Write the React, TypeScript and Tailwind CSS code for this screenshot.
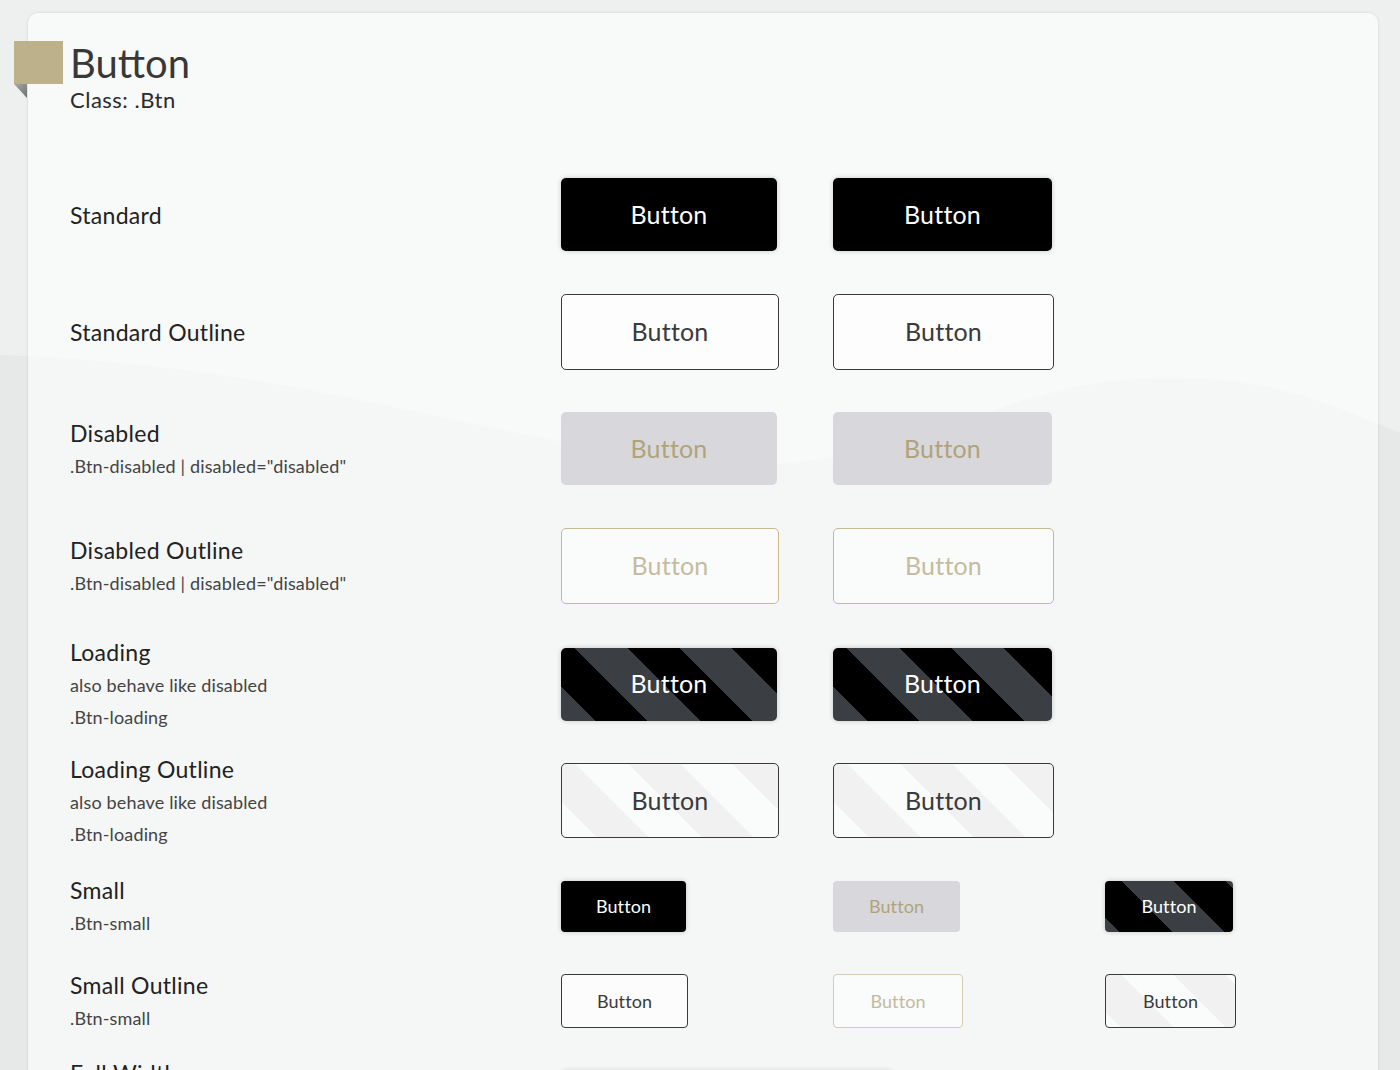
import React from "react";

type Kind =
  | "std"
  | "out"
  | "dis"
  | "disout"
  | "load"
  | "loadout"
  | "sstd"
  | "sdis"
  | "sload"
  | "sout"
  | "sdisout"
  | "sloadout";

type Btn = { kind: Kind; w: string; h: string };

const big = "text-[25px] tracking-[0.2px]";
const small = "text-[18px] tracking-[0.1px]";

const kindClass: Record<Kind, string> = {
  std: `bg-black text-white rounded-[5px] shadow-[0_0_5px_rgba(0,0,0,0.2)] ${big}`,
  out: `bg-white/70 text-[#3a3a3a] border border-[#3a3a3a] rounded-[5px] ${big}`,
  dis: `bg-[#d8d8dc] text-[#b0a37b] rounded-[5px] ${big}`,
  disout: `bg-white/50 text-[#c6bb9d] border border-[#c9b98f] rounded-[5px] ${big}`,
  load: `text-white rounded-[5px] shadow-[0_0_5px_rgba(0,0,0,0.2)] ${big} [background-image:repeating-linear-gradient(45deg,#3b3e42_0px,#3b3e42_24.5px,#000_24.5px,#000_61.5px,#3b3e42_61.5px,#3b3e42_74px)]`,
  loadout: `text-[#3a3a3a] border border-[#3a3a3a] rounded-[5px] ${big} [background-image:repeating-linear-gradient(45deg,#fafbfb_0px,#fafbfb_24.5px,#f1f1f1_24.5px,#f1f1f1_61.5px,#fafbfb_61.5px,#fafbfb_74px)]`,
  sstd: `bg-black text-white rounded-[4px] shadow-[0_0_5px_rgba(0,0,0,0.2)] ${small}`,
  sdis: `bg-[#d8d8dc] text-[#b0a37b] rounded-[4px] ${small}`,
  sload: `text-white rounded-[4px] shadow-[0_0_5px_rgba(0,0,0,0.2)] ${small} [background-image:repeating-linear-gradient(45deg,#3b3e42_0px,#3b3e42_10.4px,#000_10.4px,#000_47.4px,#3b3e42_47.4px,#3b3e42_74px)]`,
  sout: `bg-white/70 text-[#3a3a3a] border border-[#3a3a3a] rounded-[4px] ${small}`,
  sdisout: `bg-white/50 text-[#c4b9a0] border border-[#d6cbb0] rounded-[4px] ${small}`,
  sloadout: `text-[#3a3a3a] border border-[#3a3a3a] rounded-[4px] ${small} [background-image:repeating-linear-gradient(45deg,#fafbfb_0px,#fafbfb_10.4px,#f1f1f1_10.4px,#f1f1f1_47.4px,#fafbfb_47.4px,#fafbfb_74px)]`,
};

type Row = { label: string; subs: string[]; h: string; buttons: Btn[] };

const disSub = '.Btn-disabled | disabled="disabled"';
const loadSubs = ["also behave like disabled", ".Btn-loading"];

const rows: Row[] = [
  {
    label: "Standard",
    subs: [],
    h: "h-[117px]",
    buttons: [
      { kind: "std", w: "w-[216px]", h: "h-[73px]" },
      { kind: "std", w: "w-[219px]", h: "h-[73px]" },
    ],
  },
  {
    label: "Standard Outline",
    subs: [],
    h: "h-[117px]",
    buttons: [
      { kind: "out", w: "w-[218px]", h: "h-[76px]" },
      { kind: "out", w: "w-[221px]", h: "h-[76px]" },
    ],
  },
  {
    label: "Disabled",
    subs: [disSub],
    h: "h-[117px]",
    buttons: [
      { kind: "dis", w: "w-[216px]", h: "h-[73px]" },
      { kind: "dis", w: "w-[219px]", h: "h-[73px]" },
    ],
  },
  {
    label: "Disabled Outline",
    subs: [disSub],
    h: "h-[118px]",
    buttons: [
      { kind: "disout", w: "w-[218px]", h: "h-[76px]" },
      { kind: "disout", w: "w-[221px]", h: "h-[76px]" },
    ],
  },
  {
    label: "Loading",
    subs: loadSubs,
    h: "h-[118px]",
    buttons: [
      { kind: "load", w: "w-[216px]", h: "h-[73px]" },
      { kind: "load", w: "w-[219px]", h: "h-[73px]" },
    ],
  },
  {
    label: "Loading Outline",
    subs: loadSubs,
    h: "h-[115px]",
    buttons: [
      { kind: "loadout", w: "w-[218px]", h: "h-[75px]" },
      { kind: "loadout", w: "w-[221px]", h: "h-[75px]" },
    ],
  },
  {
    label: "Small",
    subs: [".Btn-small"],
    h: "h-[96px]",
    buttons: [
      { kind: "sstd", w: "w-[125px]", h: "h-[51px]" },
      { kind: "sdis", w: "w-[127px]", h: "h-[51px]" },
      { kind: "sload", w: "w-[128px]", h: "h-[51px]" },
    ],
  },
  {
    label: "Small Outline",
    subs: [".Btn-small"],
    h: "h-[94px]",
    buttons: [
      { kind: "sout", w: "w-[127px]", h: "h-[54px]" },
      { kind: "sdisout", w: "w-[130px]", h: "h-[54px]" },
      { kind: "sloadout", w: "w-[131px]", h: "h-[54px]" },
    ],
  },
];

function Button({ b }: { b: Btn }) {
  return (
    <div
      className={`${b.w} ${b.h} ${kindClass[b.kind]} flex items-center justify-center shrink-0 select-none`}
    >
      Button
    </div>
  );
}

function Label({ label, subs }: { label: string; subs: string[] }) {
  return (
    <div className="w-[491px] shrink-0">
      <div className="text-[23px] leading-[34px] tracking-[0.3px] text-[#222]">{label}</div>
      {subs.map((s) => (
        <div key={s} className="text-[18px] leading-[32px] tracking-[0.15px] text-[#444]">
          {s}
        </div>
      ))}
    </div>
  );
}

export default function App() {
  return (
    <div className="relative h-[1070px] w-[1400px] overflow-hidden bg-[#eef0f0] font-[Lato,'Liberation_Sans',sans-serif]">
      <svg
        className="absolute inset-0 w-full h-full pointer-events-none"
        viewBox="0 0 1400 1070"
        preserveAspectRatio="none"
      >
        <path
          d="M0 355 C 300 365, 480 440, 700 462 C 900 480, 980 385, 1150 378 C 1280 374, 1340 410, 1400 432 L1400 1070 L0 1070 Z"
          fill="rgba(0,0,0,0.028)"
        />
      </svg>

      <div className="relative ml-[28px] mr-[22px] mt-[13px] h-[1200px] rounded-t-[10px] bg-white/60 shadow-[0_0_3px_rgba(0,0,0,0.12)] pl-[42px] pt-[30px]">
        {/* ribbon badge */}
        <div className="absolute left-[-14px] top-[28px] w-[49px] h-[43px] bg-[#bdb18c]" />
        <svg className="absolute left-[-14px] top-[71px]" width="13" height="14" viewBox="0 0 13 14">
          <defs>
            <linearGradient id="fold" x1="0" y1="0" x2="1" y2="1">
              <stop offset="0" stopColor="#a9a9a9" />
              <stop offset="1" stopColor="#6f6f6f" />
            </linearGradient>
          </defs>
          <polygon points="0,0 13,0 13,14" fill="url(#fold)" />
        </svg>

        <div className="text-[40px] leading-[40px] text-[#383838]">Button</div>
        <div className="mt-[4px] text-[22px] leading-[26px] tracking-[0.5px] text-[#2b2b2b]">Class: .Btn</div>

        <div className="mt-[43px] flex flex-col">
          {rows.map((r) => (
            <div key={r.label} className={`${r.h} flex items-center`}>
              <Label label={r.label} subs={r.subs} />
              <div className="flex">
                {r.buttons.map((b, i) => (
                  <div key={i} className="w-[272px] flex items-center">
                    <Button b={b} />
                  </div>
                ))}
              </div>
            </div>
          ))}

          <div className="flex items-start pt-[8px]">
            <Label label="Full Width" subs={[".Btn-full"]} />
            <div className={`mt-[15px] w-[332px] h-[73px] bg-black text-white rounded-[5px] shadow-[0_0_5px_rgba(0,0,0,0.2)] ${big} flex items-center justify-center`}>
              Button
            </div>
          </div>
        </div>
      </div>
    </div>
  );
}
